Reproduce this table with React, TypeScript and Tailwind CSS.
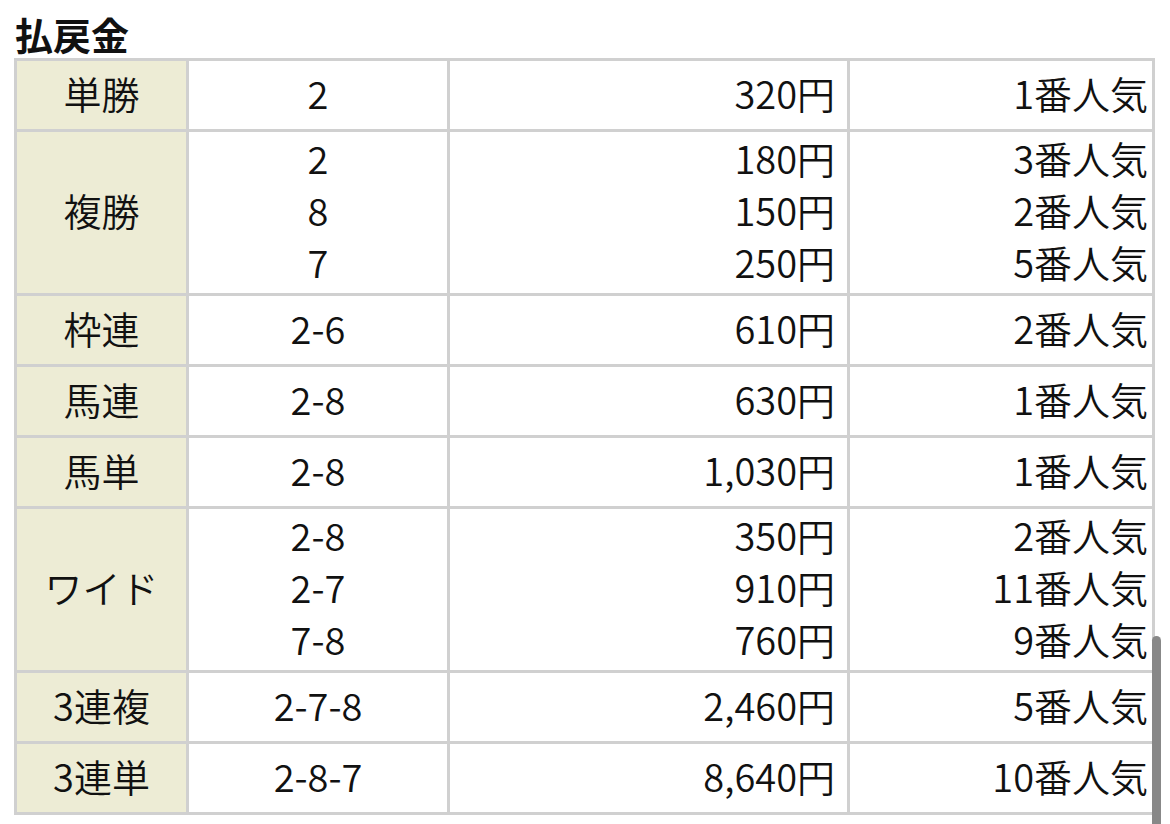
type Payout = {
  kind: string;
  rows: { combo: string; yen: string; rank: string }[];
};

const payouts: Payout[] = [
  { kind: "単勝", rows: [{ combo: "2", yen: "320円", rank: "1番人気" }] },
  {
    kind: "複勝",
    rows: [
      { combo: "2", yen: "180円", rank: "3番人気" },
      { combo: "8", yen: "150円", rank: "2番人気" },
      { combo: "7", yen: "250円", rank: "5番人気" },
    ],
  },
  { kind: "枠連", rows: [{ combo: "2-6", yen: "610円", rank: "2番人気" }] },
  { kind: "馬連", rows: [{ combo: "2-8", yen: "630円", rank: "1番人気" }] },
  { kind: "馬単", rows: [{ combo: "2-8", yen: "1,030円", rank: "1番人気" }] },
  {
    kind: "ワイド",
    rows: [
      { combo: "2-8", yen: "350円", rank: "2番人気" },
      { combo: "2-7", yen: "910円", rank: "11番人気" },
      { combo: "7-8", yen: "760円", rank: "9番人気" },
    ],
  },
  { kind: "3連複", rows: [{ combo: "2-7-8", yen: "2,460円", rank: "5番人気" }] },
  { kind: "3連単", rows: [{ combo: "2-8-7", yen: "8,640円", rank: "10番人気" }] },
];

const cell = "border-[3px] border-[#d0d0d0] h-[71px] pt-0 pb-[5px] align-middle";

export default function App() {
  return (
    <div className="relative h-[824px] w-[1170px] overflow-hidden bg-white font-['Noto_Sans_CJK_JP','Noto_Sans',sans-serif] text-[#111]">
      <h2 className="ml-[15px] mt-[13px] text-[38px] font-bold leading-[41px]">払戻金</h2>

      <table className="ml-[14px] mt-[4px] w-[1138px] table-fixed border-collapse text-[38px] font-[350] leading-[52px]">
        <colgroup>
          <col className="w-[172px]" />
          <col className="w-[261px]" />
          <col className="w-[400px]" />
          <col className="w-[305px]" />
        </colgroup>
        <tbody>
          {payouts.map((p) => (
            <tr key={p.kind}>
              <th className={`${cell} bg-[#edecd5] text-center font-[350]`}>{p.kind}</th>
              <td className={`${cell} text-center`}>
                {p.rows.map((r, i) => (
                  <div key={i}>{r.combo}</div>
                ))}
              </td>
              <td className={`${cell} pr-[12px] text-right`}>
                {p.rows.map((r, i) => (
                  <div key={i}>{r.yen}</div>
                ))}
              </td>
              <td className={`${cell} pr-[4px] text-right`}>
                {p.rows.map((r, i) => (
                  <div key={i}>{r.rank}</div>
                ))}
              </td>
            </tr>
          ))}
        </tbody>
      </table>

      {/* iOS style scroll indicator */}
      <div className="absolute left-[1152px] top-[636px] h-[200px] w-[9px] rounded-full bg-[#888888]" />
    </div>
  );
}
